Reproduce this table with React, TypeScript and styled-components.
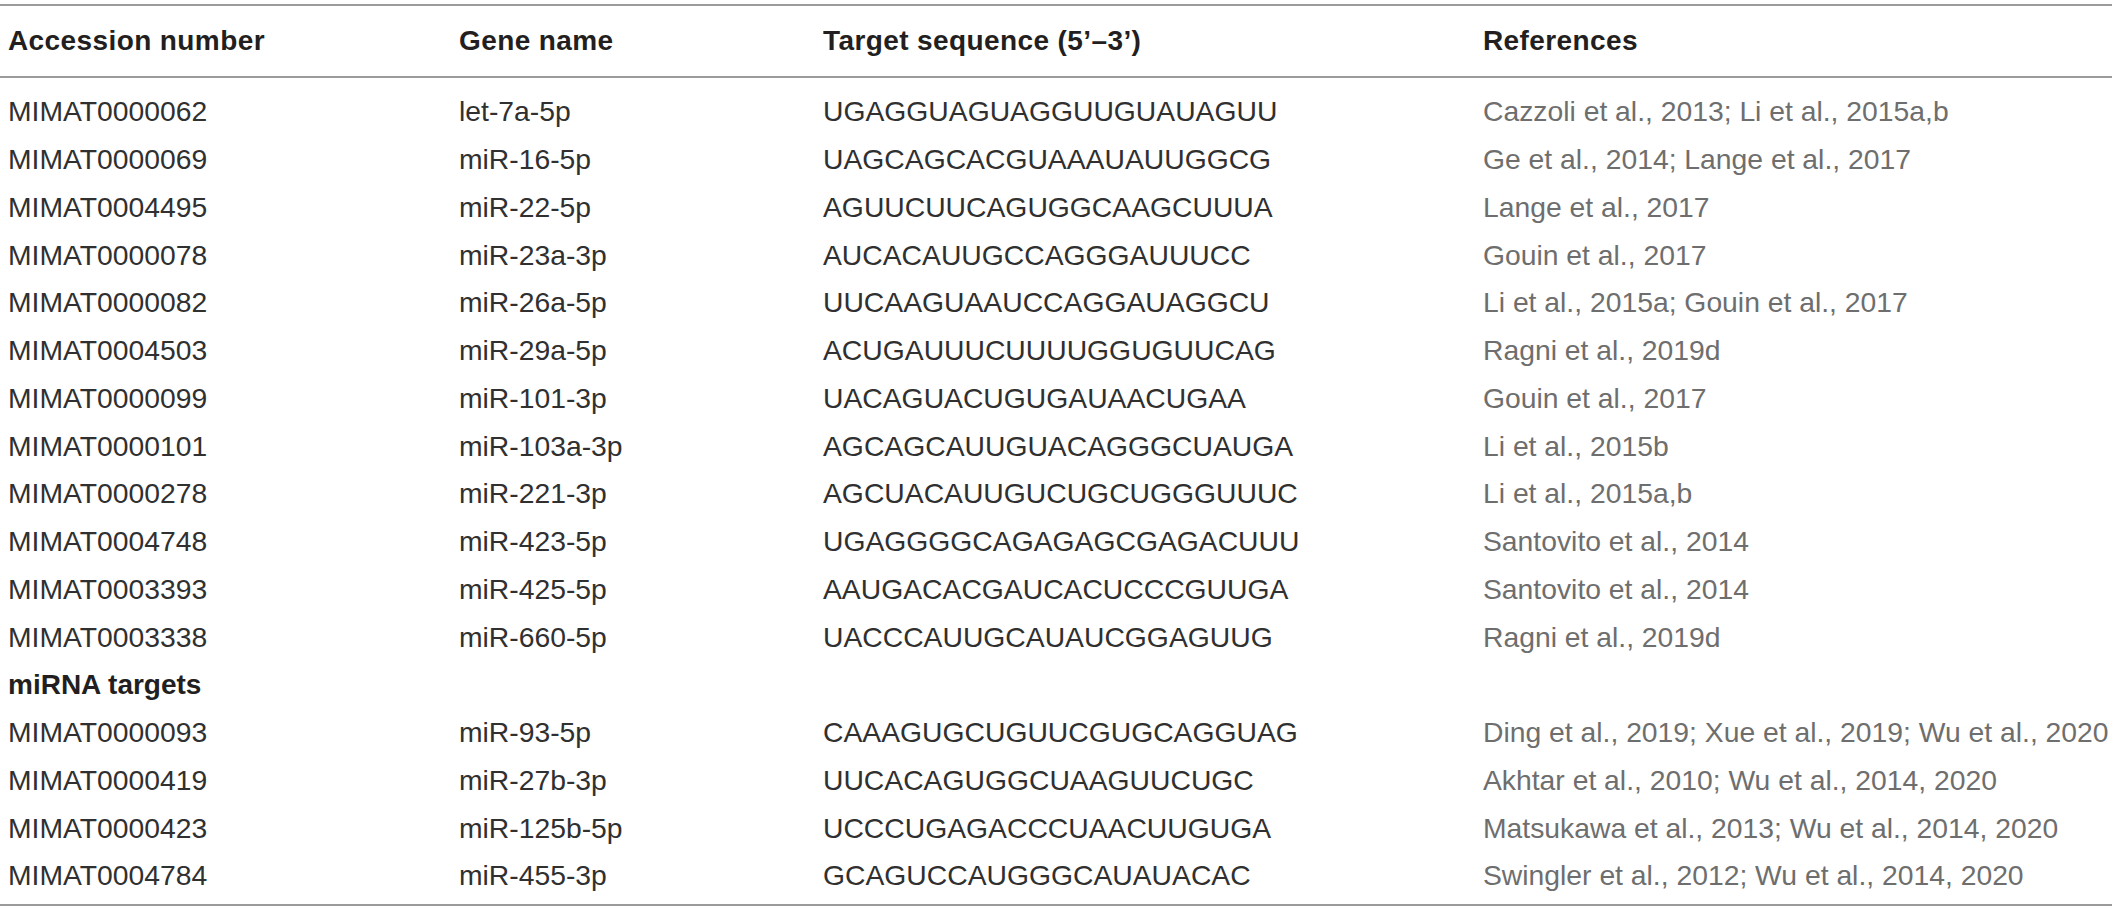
import React from "react";
import styled, { createGlobalStyle } from "styled-components";

const GlobalStyle = createGlobalStyle`
  html, body {
    margin: 0;
    padding: 0;
    background: #ffffff;
  }
  body {
    font-family: "Liberation Sans", Arial, Helvetica, sans-serif;
    color: #231f20;
  }
`;

const Table = styled.div`
  width: 2112px;
  margin-top: 4px;
  border-top: 2px solid #9b9b9b;
  border-bottom: 2px solid #9b9b9b;
  padding-bottom: 4px;
`;

const HeaderRow = styled.div`
  display: grid;
  grid-template-columns: 451px 364px 660px 1fr;
  align-items: center;
  height: 70px;
  padding-left: 8px;
  border-bottom: 2px solid #9b9b9b;
  margin-bottom: 10px;
`;

const HeaderCell = styled.div`
  font-size: 28px;
  font-weight: 700;
  letter-spacing: 0.4px;
  color: #231f20;
  white-space: nowrap;
`;

const Row = styled.div`
  display: grid;
  grid-template-columns: 451px 364px 660px 1fr;
  align-items: center;
  height: 47.75px;
  padding-left: 8px;
`;

const Cell = styled.div<{ $muted?: boolean }>`
  font-size: 28.3px;
  font-weight: 400;
  color: ${(p) => (p.$muted ? "#6e6e6e" : "#303030")};
  white-space: nowrap;
`;

const SectionCell = styled.div`
  grid-column: 1 / -1;
  font-size: 28px;
  font-weight: 700;
  color: #231f20;
`;

type Entry = [string, string, string, string];

const main: Entry[] = [
  ["MIMAT0000062", "let-7a-5p", "UGAGGUAGUAGGUUGUAUAGUU", "Cazzoli et al., 2013; Li et al., 2015a,b"],
  ["MIMAT0000069", "miR-16-5p", "UAGCAGCACGUAAAUAUUGGCG", "Ge et al., 2014; Lange et al., 2017"],
  ["MIMAT0004495", "miR-22-5p", "AGUUCUUCAGUGGCAAGCUUUA", "Lange et al., 2017"],
  ["MIMAT0000078", "miR-23a-3p", "AUCACAUUGCCAGGGAUUUCC", "Gouin et al., 2017"],
  ["MIMAT0000082", "miR-26a-5p", "UUCAAGUAAUCCAGGAUAGGCU", "Li et al., 2015a; Gouin et al., 2017"],
  ["MIMAT0004503", "miR-29a-5p", "ACUGAUUUCUUUUGGUGUUCAG", "Ragni et al., 2019d"],
  ["MIMAT0000099", "miR-101-3p", "UACAGUACUGUGAUAACUGAA", "Gouin et al., 2017"],
  ["MIMAT0000101", "miR-103a-3p", "AGCAGCAUUGUACAGGGCUAUGA", "Li et al., 2015b"],
  ["MIMAT0000278", "miR-221-3p", "AGCUACAUUGUCUGCUGGGUUUC", "Li et al., 2015a,b"],
  ["MIMAT0004748", "miR-423-5p", "UGAGGGGCAGAGAGCGAGACUUU", "Santovito et al., 2014"],
  ["MIMAT0003393", "miR-425-5p", "AAUGACACGAUCACUCCCGUUGA", "Santovito et al., 2014"],
  ["MIMAT0003338", "miR-660-5p", "UACCCAUUGCAUAUCGGAGUUG", "Ragni et al., 2019d"],
];

const targets: Entry[] = [
  ["MIMAT0000093", "miR-93-5p", "CAAAGUGCUGUUCGUGCAGGUAG", "Ding et al., 2019; Xue et al., 2019; Wu et al., 2020"],
  ["MIMAT0000419", "miR-27b-3p", "UUCACAGUGGCUAAGUUCUGC", "Akhtar et al., 2010; Wu et al., 2014, 2020"],
  ["MIMAT0000423", "miR-125b-5p", "UCCCUGAGACCCUAACUUGUGA", "Matsukawa et al., 2013; Wu et al., 2014, 2020"],
  ["MIMAT0004784", "miR-455-3p", "GCAGUCCAUGGGCAUAUACAC", "Swingler et al., 2012; Wu et al., 2014, 2020"],
];

const DataRow: React.FC<{ e: Entry }> = ({ e }) => (
  <Row>
    <Cell>{e[0]}</Cell>
    <Cell>{e[1]}</Cell>
    <Cell>{e[2]}</Cell>
    <Cell $muted>{e[3]}</Cell>
  </Row>
);

export default function App() {
  return (
    <>
      <GlobalStyle />
      <Table>
        <HeaderRow>
          <HeaderCell>Accession number</HeaderCell>
          <HeaderCell>Gene name</HeaderCell>
          <HeaderCell>Target sequence (5’–3’)</HeaderCell>
          <HeaderCell>References</HeaderCell>
        </HeaderRow>
        {main.map((e) => (
          <DataRow key={e[0]} e={e} />
        ))}
        <Row>
          <SectionCell>miRNA targets</SectionCell>
        </Row>
        {targets.map((e) => (
          <DataRow key={e[0]} e={e} />
        ))}
      </Table>
    </>
  );
}
